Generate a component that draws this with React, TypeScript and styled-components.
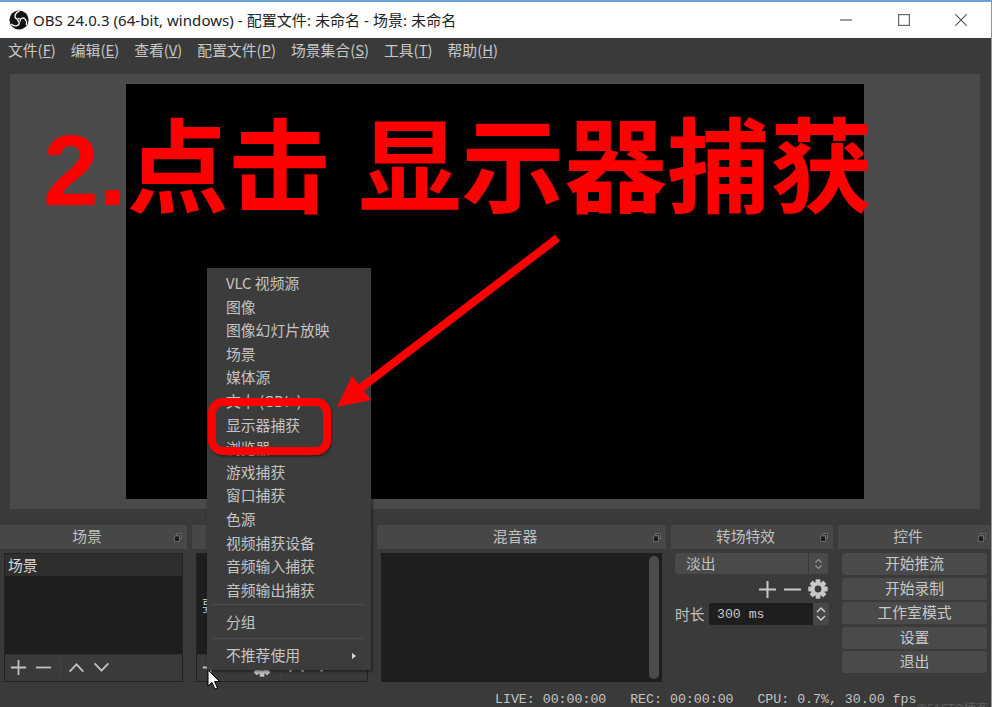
import React from 'react';
import styled, { createGlobalStyle } from 'styled-components';

const sans = `"Noto Sans", "Noto Sans CJK SC", sans-serif`;
const cjk = `"Noto Sans CJK SC", "Noto Sans", sans-serif`;
const mono = `"Liberation Mono", "Noto Sans CJK SC", monospace`;

const Global = createGlobalStyle`
  html, body { margin: 0; padding: 0; background: #3a3a3a; }
  * { box-sizing: border-box; }
`;

const Win = styled.div`
  position: relative; width: 992px; height: 707px; overflow: hidden;
  display: flex; flex-direction: column;
  background: #3a3a3a; color: #c6c6c6; font: 14.8px ${cjk};
  border-top: 2px solid #6aa2d0; border-right: 1px solid #6aa2d0;
`;
const TitleBar = styled.div`
  height: 36px; flex: none; background: #fff; color: #222;
  display: flex; align-items: center; padding-left: 9px;
`;
const TitleText = styled.span`
  margin-left: 4px; font: 15px/1 ${sans}; white-space: nowrap; letter-spacing: 0.06px;
`;
const WinButtons = styled.div`
  margin-left: auto; padding-right: 1px; display: flex; align-items: center; color: #555;
`;
const WinButton = styled.div`
  width: 57.5px; height: 36px; display: flex; align-items: center; justify-content: center;
`;
const MenuBar = styled.div`
  height: 27px; flex: none; display: flex; align-items: center; gap: 15px; padding: 0 0 2px 8px;
  font: 14.8px/1 ${cjk}; color: #c8c8c8; white-space: nowrap;
`;
const Und = styled.span`text-decoration: underline;`;
const PreviewWrap = styled.div`
  margin: 9px 11px 0 10px; height: 435px; flex: none; background: #4a4a4a;
  padding: 10px 116px 10px 116px; 
`;
const Black = styled.div`width: 100%; height: 100%; background: #000;`;
const Docks = styled.div`
  margin-top: 16px; display: grid; grid-template-columns: 187px 180px 289px 162px 153px; gap: 5px;
  height: 158px;
`;
const Dock = styled.section`display: flex; flex-direction: column; min-width: 0;`;
const DockTitle = styled.div`
  position: relative; height: 24px; flex: none; background: #474747; color: #c0c0c0; padding: 0 13px 2px 0;
  display: flex; align-items: center; justify-content: center; font: 14.8px/1 ${cjk};
`;
const FloatIcon = styled.svg`position: absolute; right: 5px; top: 8px;`;
const DockBody = styled.div<{ $px?: number }>`
  flex: 1; padding: 4px ${p => p.$px ?? 4}px 0; display: flex; flex-direction: column; min-height: 0;
`;
const ListFrame = styled.div`
  height: 129px; border: 1px solid #222; display: flex; flex-direction: column;
`;
const ListArea = styled.div`flex: 1; background: #1e1e1e; min-height: 0;`;
const ListRow = styled.div`
  height: 22px; background: #2e2e2e; color: #d8d8d8; padding-left: 3px;
  display: flex; align-items: center; font: 14.8px/1 ${cjk};
`;
const HintText = styled.div`padding: 44px 0 0 5px; font: 14.8px/1 ${cjk}; color: #c0c0c0;`;
const ToolRow = styled.div`
  height: 27px; flex: none; display: flex; align-items: center; gap: 8px; padding: 0 0 2px 5px; background: #3a3a3a;
  border-top: 1px solid #303030; color: #c0c0c0;
`;
const ToolSep = styled.div`width: 1px; height: 18px; background: #444; margin-right: -1px;`;
const MixerFrame = styled.div`
  height: 129px; margin: 0 4px; background: #1e1e1e; padding: 3px 3px 3px 0;
  display: flex; justify-content: flex-end;
`;
const Scrollbar = styled.div`width: 10px; background: #4c4c4c; border-radius: 5px;`;
const Select = styled.div`
  height: 21px; margin: 0 5px 0 4px; background: #4a4a4a; border-radius: 3px; display: flex; align-items: center;
  padding-left: 11px; font: 14.8px/1 ${cjk}; color: #c0c0c0;
`;
const SelectBtn = styled.div`
  margin-left: auto; width: 20px; height: 100%; border-left: 1px solid #3a3a3a;
  display: flex; align-items: center; justify-content: center;
`;
const TransTools = styled.div`
  height: 20px; margin-top: 5px; display: flex; justify-content: flex-end; align-items: center; gap: 6px; padding-right: 5px;
  color: #c8c8c8;
`;
const DurRow = styled.div`
  margin-top: 4px; height: 22px; padding: 0 4px; display: flex; align-items: center; font: 14.8px/1 ${cjk}; color: #c0c0c0;
  white-space: nowrap;
`;
const DurBox = styled.div`
  margin-left: 4.4px; width: 104px; flex: none; height: 22px; background: #1e1e1e; border-radius: 3px 0 0 3px;
  display: flex; align-items: center; padding: 2px 0 0 8px; font: 13.2px/1 ${mono}; color: #c8c8c8;
`;
const DurSpin = styled.div`
  width: 16px; flex: none; height: 22px; background: #474747; border-radius: 0 3px 3px 0;
  display: flex; align-items: center; justify-content: center;
`;
const BtnStack = styled.div`display: flex; flex-direction: column; gap: 2.6px; padding: 0 4px 0 4px;`;
const CtlButton = styled.div`
  height: 22px; background: #4a4a4a; border-radius: 3px; color: #c8c8c8; padding-bottom: 1px;
  display: flex; align-items: center; justify-content: center; font: 14.8px/1 ${cjk};
`;
const Status = styled.div`
  height: 23px; display: flex; align-items: center; padding: 11px 0 0 495px; font: 13.25px/1 ${mono}; color: #c4c4c4;
  white-space: pre;
`;
const Watermark = styled.div`
  position: absolute; right: 3px; bottom: -8px; font: 12px/1 ${sans}; color: #5c5c5c;
`;
const PopMenu = styled.div`
  position: absolute; left: 207px; top: 266px; width: 164px; height: 402px; background: #3c3c3c;
  box-shadow: 1px 1px 3px rgba(0,0,0,.6); padding-top: 3.6px; z-index: 3;
`;
const MenuItem = styled.div`
  position: relative; height: 23.6px; display: flex; align-items: center; padding-left: 19px; color: #c4c4c4;
  font: 14.8px/1 ${cjk}; white-space: nowrap;
`;
const MenuSep = styled.div<{ $mt: number; $mb: number }>`
  height: 1px; background: #4c4c4c; margin: ${p => p.$mt}px 7px ${p => p.$mb}px 5px;
`;
const SubArrow = styled.span`
  position: absolute; right: 15px; top: 9px; width: 0; height: 0;
  border-left: 4px solid #ddd; border-top: 3.5px solid transparent; border-bottom: 3.5px solid transparent;
`;
const Ring = styled.div`
  position: absolute; left: 1px; top: 130px; width: 123px; height: 57px; border: 8px solid #f00; border-radius: 15px;
  z-index: 5; box-shadow: 1px 2px 2px rgba(0,0,0,.35);
`;
const Headline = styled.div`
  position: absolute; left: 43px; top: 97px; z-index: 4; color: #f00; white-space: pre; font: 700 100px/1.2 ${cjk};
  display: flex; align-items: baseline;
`;
const HeadNum = styled.span`font-family: "Liberation Sans", sans-serif;`;
const HeadLead = styled.span`font-size: 102px;`;
const HeadRest = styled.span`margin-left: 28px; font-size: 103px; letter-spacing: -.1px;`;
const ArrowArt = styled.svg`position: absolute; left: 0; top: -2px; z-index: 4; pointer-events: none;`;
const CursorArt = styled.svg`position: absolute; left: 207px; top: 667px; z-index: 7;`;

const ObsLogo = () => (
  <svg width="20" height="20" viewBox="0 0 20 20">
    <circle cx="10" cy="10" r="9.6" fill="#111" />
    {[0, 120, 240].map(a => (
      <path key={a} d="M10.5 1.2C5.8 2.6 5 7 7.2 8.6 8.4 9.4 10 9 10.4 8" fill="none" stroke="#fff" strokeWidth="1.3" transform={`rotate(${a} 10 10)`} />
    ))}
  </svg>
);
const Plus = ({ s = 19 }: { s?: number }) => (
  <svg width={s} height={s} viewBox="0 0 19 19"><path d="M9.5 1v17M1 9.5h17" stroke="currentColor" strokeWidth="2" /></svg>
);
const Minus = ({ s = 19 }: { s?: number }) => (
  <svg width={s} height={s} viewBox="0 0 19 19"><path d="M1 9.5h17" stroke="currentColor" strokeWidth="2" /></svg>
);
const Chev = ({ up }: { up?: boolean }) => (
  <svg width="17" height="11" viewBox="0 0 18 12">
    <path d={up ? 'M1.5 10.5L9 2.5l7.5 8' : 'M1.5 1.5L9 9.5l7.5-8'} fill="none" stroke="currentColor" strokeWidth="2" />
  </svg>
);
const Gear = () => (
  <svg width="20" height="20" viewBox="0 0 20 20">
    <g fill="currentColor">
      {[0, 45, 90, 135].map(a => <rect key={a} x="7.6" y="0.3" width="4.8" height="19.4" rx="1" transform={`rotate(${a} 10 10)`} />)}
    </g>
    <circle cx="10" cy="10" r="7" fill="currentColor" />
    <circle cx="10" cy="10" r="3.4" fill="#3a3a3a" />
  </svg>
);
const Float = () => (
  <FloatIcon width="8" height="9" viewBox="0 0 8 9">
    <path d="M2.5 .5h5v5h-1.5v-3.5h-3.5zM.5 3h5v5.5h-5z" fill="#1c1c1c" stroke="#8a8a8a" strokeWidth=".6" />
  </FloatIcon>
);
const Spin = ({ c, w, h }: { c: string; w: number; h: number }) => (
  <svg width={w} height={h} viewBox="0 0 12 18">
    <path d="M2 7l4-4 4 4M2 11l4 4 4-4" fill="none" stroke={c} strokeWidth="1.5" />
  </svg>
);

const M = ({ t, k }: { t: string; k: string }) => <span>{t}(<Und>{k}</Und>)</span>;

const items = ['VLC 视频源', '图像', '图像幻灯片放映', '场景', '媒体源', '文本 (GDI+)', '显示器捕获', '浏览器', '游戏捕获', '窗口捕获', '色源', '视频捕获设备', '音频输入捕获', '音频输出捕获'];

export default function App() {
  return (
    <>
      <Global />
      <Win>
        <TitleBar>
          <ObsLogo />
          <TitleText>OBS 24.0.3 (64-bit, windows) - 配置文件: 未命名 - 场景: 未命名</TitleText>
          <WinButtons>
            <WinButton><svg width="12" height="12" viewBox="0 0 12 12"><path d="M0 6h12" stroke="#777" strokeWidth="1.4" /></svg></WinButton>
            <WinButton><svg width="12" height="12" viewBox="0 0 12 12"><rect x=".6" y=".6" width="10.8" height="10.8" fill="none" stroke="#666" strokeWidth="1.2" /></svg></WinButton>
            <WinButton><svg width="12" height="12" viewBox="0 0 12 12"><path d="M.3.3l11.4 11.4M11.7.3L.3 11.7" stroke="#555" strokeWidth="1.2" /></svg></WinButton>
          </WinButtons>
        </TitleBar>
        <MenuBar>
          <M t="文件" k="F" /><M t="编辑" k="E" /><M t="查看" k="V" /><M t="配置文件" k="P" /><M t="场景集合" k="S" /><M t="工具" k="T" /><M t="帮助" k="H" />
        </MenuBar>
        <PreviewWrap><Black /></PreviewWrap>
        <Docks>
          <Dock>
            <DockTitle>场景<Float /></DockTitle>
            <DockBody>
              <ListFrame>
                <ListArea><ListRow>场景</ListRow></ListArea>
                <ToolRow><Plus s={17} /><Minus s={17} /><ToolSep /><Chev up /><Chev /></ToolRow>
              </ListFrame>
            </DockBody>
          </Dock>
          <Dock>
            <DockTitle>来源<Float /></DockTitle>
            <DockBody>
              <ListFrame>
                <ListArea><HintText>要添加来源</HintText></ListArea>
                <ToolRow><Plus s={17} /><Minus s={17} /><Gear /><ToolSep /><Chev up /><Chev /></ToolRow>
              </ListFrame>
            </DockBody>
          </Dock>
          <Dock>
            <DockTitle>混音器<Float /></DockTitle>
            <DockBody $px={0}>
              <MixerFrame><Scrollbar /></MixerFrame>
            </DockBody>
          </Dock>
          <Dock>
            <DockTitle>转场特效<Float /></DockTitle>
            <DockBody $px={0}>
              <Select>淡出<SelectBtn><Spin c="#999" w={9} h={14} /></SelectBtn></Select>
              <TransTools><Plus /><Minus /><Gear /></TransTools>
              <DurRow>时长<DurBox>300 ms</DurBox><DurSpin><Spin c="#ccc" w={12} h={20} /></DurSpin></DurRow>
            </DockBody>
          </Dock>
          <Dock>
            <DockTitle>控件<Float /></DockTitle>
            <DockBody $px={0}>
              <BtnStack>
                <CtlButton>开始推流</CtlButton>
                <CtlButton>开始录制</CtlButton>
                <CtlButton>工作室模式</CtlButton>
                <CtlButton>设置</CtlButton>
                <CtlButton>退出</CtlButton>
              </BtnStack>
            </DockBody>
          </Dock>
        </Docks>
        <Status>{'LIVE: 00:00:00   REC: 00:00:00   CPU: 0.7%, 30.00 fps'}</Status>
        <Watermark>@51CTO博客</Watermark>

        <PopMenu>
          <Ring />
          {items.map(t => <MenuItem key={t}>{t}</MenuItem>)}
          <MenuSep $mt={2} $mb={6} />
          <MenuItem>分组</MenuItem>
          <MenuSep $mt={3} $mb={5} />
          <MenuItem>不推荐使用<SubArrow /></MenuItem>
        </PopMenu>
        <Headline><HeadNum>2.</HeadNum><HeadLead>点击</HeadLead><HeadRest>显示器捕获</HeadRest></Headline>
        <ArrowArt width="992" height="707" viewBox="0 0 992 707">
          <path d="M557.5 238L358 390" stroke="#f00" strokeWidth="8" />
          <path d="M337 407L352 376L371 400Z" fill="#f00" />
        </ArrowArt>
        <CursorArt width="14" height="22" viewBox="0 0 14 22">
          <path d="M1 1v16l4-3.5 3 6.5 2.5-1-3-6.5H12.5z" fill="#fff" stroke="#000" strokeWidth="1" />
        </CursorArt>
      </Win>
    </>
  );
}
